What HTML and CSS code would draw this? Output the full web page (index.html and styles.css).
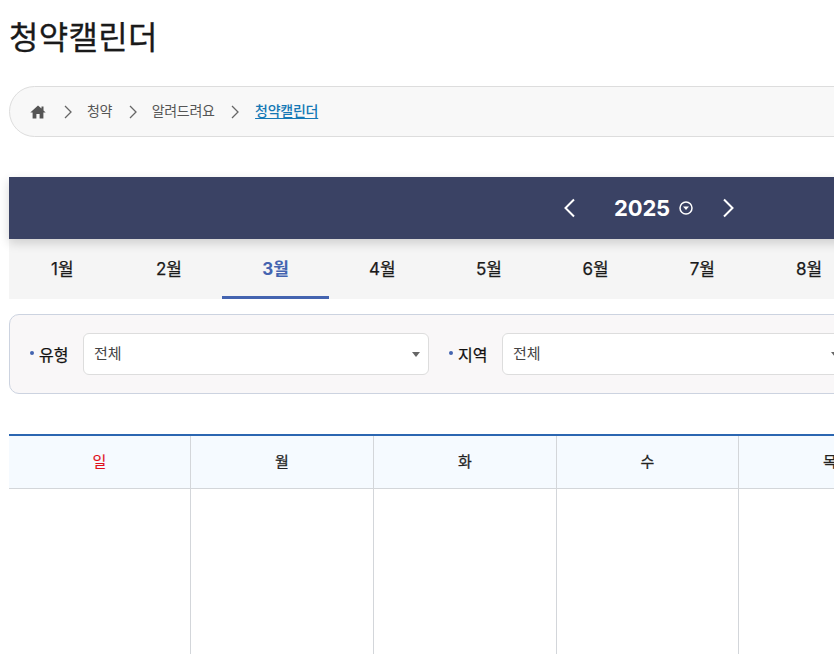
FILE: index.html
```html
<!DOCTYPE html>
<html lang="ko">
<head>
<meta charset="utf-8">
<title>청약캘린더</title>
<link rel="stylesheet" href="styles.css">
</head>
<body>
<main class="page">
  <h1 class="title">청약캘린더</h1>
  <nav class="crumbs">
    <svg class="home" viewBox="0 0 16 14" width="16" height="14"><path d="M8 0.5 11.500 3.600V1.500H13.500V5.400L15.700 7.400H13.400V13.500H9.600V9H6.400V13.500H2.600V7.400H0.300Z" fill="#555"/></svg>
    <svg class="sep" viewBox="0 0 8 14" width="8" height="14"><path d="M1 1l6 6-6 6" fill="none" stroke="#666" stroke-width="1.3"/></svg>
    <span class="crumb">청약</span>
    <svg class="sep" viewBox="0 0 8 14" width="8" height="14"><path d="M1 1l6 6-6 6" fill="none" stroke="#666" stroke-width="1.3"/></svg>
    <span class="crumb">알려드려요</span>
    <svg class="sep" viewBox="0 0 8 14" width="8" height="14"><path d="M1 1l6 6-6 6" fill="none" stroke="#666" stroke-width="1.3"/></svg>
    <a class="crumb current" href="#">청약캘린더</a>
  </nav>
  <section class="year-bar">
    <svg class="arrow prev" viewBox="0 0 13 20" width="13" height="20"><path d="M11 1.500 2.500 10l8.500 8.500" fill="none" stroke="#fff" stroke-width="2"/></svg>
    <div class="year"><span>2025</span>
      <svg viewBox="0 0 14 14" width="14" height="14"><circle cx="7" cy="7" r="6" fill="none" stroke="#fff" stroke-width="1.500"/><path d="M4 5.500h6L7 9z" fill="#fff"/></svg>
    </div>
    <svg class="arrow next" viewBox="0 0 13 20" width="13" height="20"><path d="M2 1.500 10.500 10 2 18.500" fill="none" stroke="#fff" stroke-width="2"/></svg>
  </section>
  <ul class="months">
    <li>1월</li><li>2월</li><li class="active">3월</li><li>4월</li><li>5월</li><li>6월</li><li>7월</li><li>8월</li><li>9월</li><li>10월</li><li>11월</li><li>12월</li>
  </ul>
  <form class="filter">
    <div class="field">
      <span class="label">유형</span>
      <div class="select">전체<i class="caret"></i></div>
    </div>
    <div class="field">
      <span class="label">지역</span>
      <div class="select">전체<i class="caret"></i></div>
    </div>
  </form>
  <div class="cal">
    <div class="head sun">일</div><div class="head">월</div><div class="head">화</div><div class="head">수</div><div class="head">목</div><div class="head">금</div><div class="head">토</div>
    <div class="day"></div><div class="day"></div><div class="day"></div><div class="day"></div><div class="day"></div><div class="day"></div><div class="day"></div>
  </div>
</main>
</body>
</html>
```

FILE: styles.css
```css
html, body {
  margin: 0;
  padding: 0;
  height: 654px;
  overflow: hidden;
  background: #fff;
}
body {
  font-family: Inter, "Noto Sans CJK KR", sans-serif;
  color: #111;
}
.page {
  width: 1280px;
  margin-left: 9px;
}
.title {
  margin: 0;
  padding-top: 13px;
  height: 86px;
  box-sizing: border-box;
  font-size: 32px;
  line-height: 50px;
  font-weight: 400;
  -webkit-text-stroke: 0.3px #1a1a1a;
  letter-spacing: 0.3px;
  color: #1a1a1a;
}
.crumbs {
  display: flex;
  align-items: center;
  height: 51px;
  box-sizing: border-box;
  padding-left: 20px;
  background: #f8f8f8;
  border: 1px solid #ddd;
  border-radius: 26px;
  font-size: 14px;
}
.home { margin-right: 18px; margin-top: 1px; }
.sep { margin-right: 15px; margin-top: 1px; }
.crumb {
  color: #555;
  margin-right: 16.5px;
  margin-bottom: 4px;
  letter-spacing: -0.3px;
}
.current {
  color: #1578b5;
  font-weight: 500;
  margin-left: 1px;
  letter-spacing: -0.25px;
  text-decoration: underline;
  text-underline-offset: 2px;
}
.year-bar {
  display: flex;
  align-items: center;
  justify-content: center;
  height: 62px;
  margin-top: 40px;
  background: #3a4264;
  box-shadow: 0 4px 10px rgba(0, 0, 0, 0.16);
  position: relative;
  color: #fff;
}
.prev { margin-right: 38px; }
.next { margin-left: 29px; }
.year {
  display: flex;
  align-items: center;
  gap: 9px;
  font-size: 22px;
  font-weight: 700;
  letter-spacing: -0.2px;
}
.months {
  display: grid;
  grid-template-columns: repeat(12, 1fr);
  margin: 0;
  padding: 0;
  list-style: none;
  background: #f5f5f5;
  height: 60px;
}
.months li {
  height: 60px;
  text-align: center;
  font-size: 17px;
  font-weight: 400;
  -webkit-text-stroke: 0.25px #1a1a1a;
  line-height: 60px;
  box-sizing: border-box;
  color: #1a1a1a;
}
.months .active {
  color: #4464b0;
  font-weight: 700;
  -webkit-text-stroke: 0;
  border-bottom: 3px solid #4464b0;
}
.filter {
  display: grid;
  grid-template-columns: repeat(3, 1fr);
  gap: 19px;
  margin-top: 15px;
  height: 80px;
  box-sizing: border-box;
  padding: 18px 21px 18px 19px;
  background: #f9f7f8;
  border: 1px solid #ccd3e0;
  border-radius: 10px;
}
.field {
  display: flex;
  align-items: center;
}
.label {
  width: 54px;
  flex: none;
  box-sizing: border-box;
  padding-left: 10px;
  position: relative;
  font-size: 16px;
  font-weight: 400;
  -webkit-text-stroke: 0.25px #111;
}
.label::before {
  content: "";
  position: absolute;
  left: 1px;
  top: 50%;
  width: 4px;
  height: 4px;
  margin-top: -3px;
  border-radius: 50%;
  background: #4464b0;
}
.select {
  flex: 1;
  height: 42px;
  box-sizing: border-box;
  border: 1px solid #ddd;
  border-radius: 6px;
  background: #fff;
  padding-left: 10px;
  font-size: 15px;
  line-height: 40px;
  color: #444;
  position: relative;
}
.caret {
  position: absolute;
  right: 8px;
  top: 18px;
  border-style: solid;
  border-width: 5px 4px 0;
  border-color: #666 transparent transparent;
}
.cal {
  display: grid;
  grid-template-columns: 182px 183px 183px 182px 183px 183px 1fr;
  margin-top: 40px;
  border-top: 2px solid #2b66b1;
}
.head {
  height: 53px;
  box-sizing: border-box;
  background: #f5faff;
  border-right: 1px solid #d3d6da;
  border-bottom: 1px solid #d3d6da;
  text-align: center;
  font-size: 15px;
  font-weight: 400;
  -webkit-text-stroke: 0.25px #222;
  line-height: 52px;
  color: #222;
}
.head.sun { color: #e0101c; -webkit-text-stroke: 0.15px #e0101c; }
.day {
  height: 165px;
  box-sizing: border-box;
  border-right: 1px solid #d3d6da;
}
```
